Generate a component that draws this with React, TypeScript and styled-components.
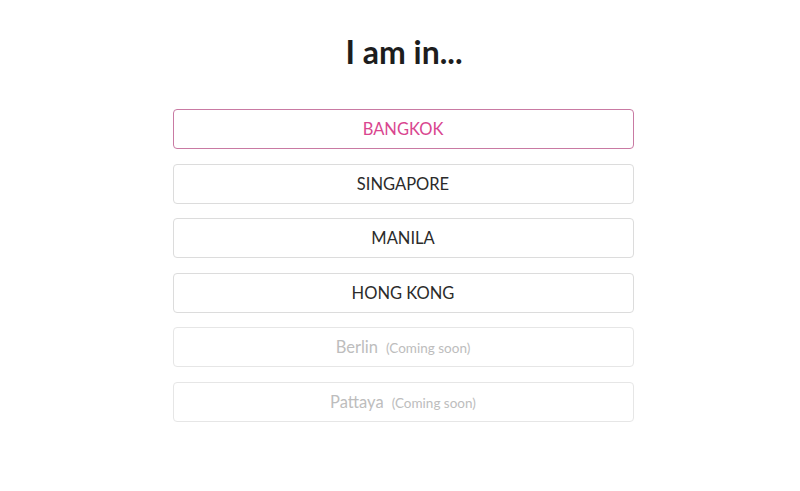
import styled, {createGlobalStyle} from "styled-components";

const GlobalStyle = createGlobalStyle`
  body {
    margin: 0;
    background: #ffffff;
    font-family: Lato, "Open Sans", sans-serif;
  }
`;

const StyledPage = styled.div`
  display: flex;
  flex-direction: column;
  align-items: center;
  padding-top: 26px;
  height: 491px;
  box-sizing: border-box;
`;

const StyledTitle = styled.h1`
  margin: 0 0 31px 0;
  font-size: 32px;
  font-weight: 700;
  color: #1d1d1d;
  line-height: 52px;
  padding-left: 8px;
`;

const StyledList = styled.div`
  display: flex;
  flex-direction: column;
  gap: 14.6px;
  width: 461px;
  margin-left: 6px;
`;

const StyledCity = styled.button<{ $active?: boolean; $disabled?: boolean }>`
  display: flex;
  align-items: center;
  justify-content: center;
  gap: 8px;
  height: 40px;
  box-sizing: border-box;
  background: #ffffff;
  border: 1px solid ${props => props.$active ? "#c97aa3" : props.$disabled ? "#e6e6e6" : "#dcdcdc"};
  border-radius: 4px;
  font-family: Lato, "Open Sans", sans-serif;
  font-size: 16.5px;
  color: ${props => props.$active ? "#d9468f" : props.$disabled ? "#bdbdbd" : "#2b2b2b"};
  cursor: ${props => props.$disabled ? "default" : "pointer"};
`;

const StyledSoon = styled.span`
  font-size: 13.5px;
  color: #bdbdbd;
  padding-top: 2px;
`;

const cities = [
    {name: "BANGKOK", active: true},
    {name: "SINGAPORE"},
    {name: "MANILA"},
    {name: "HONG KONG"},
    {name: "Berlin", soon: true},
    {name: "Pattaya", soon: true},
];

export default function App() {
    return (
        <>
            <GlobalStyle/>
            <StyledPage>
                <StyledTitle>I am in...</StyledTitle>
                <StyledList>
                    {cities.map(city => (
                        <StyledCity key={city.name} $active={city.active} $disabled={city.soon}>
                            {city.name}
                            {city.soon && <StyledSoon>(Coming soon)</StyledSoon>}
                        </StyledCity>
                    ))}
                </StyledList>
            </StyledPage>
        </>
    );
}
